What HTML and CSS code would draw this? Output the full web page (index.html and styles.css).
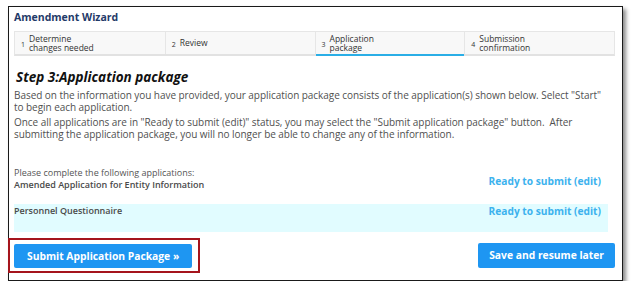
FILE: index.html
```html
<!DOCTYPE html>
<html lang="en">
<head>
  <meta charset="UTF-8" />
  <title>Amendment Wizard</title>
  <link rel="stylesheet" href="styles.css">
</head>
<body>

  <div class="frame">
    <h1 class="wizard-title">Amendment Wizard</h1>

    <!-- Steps -->
    <ol class="steps">
      <li class="step"><span class="step-num">1</span><span class="step-label">Determine<br>changes needed</span></li>
      <li class="step"><span class="step-num">2</span><span class="step-label">Review</span></li>
      <li class="step is-active"><span class="step-num">3</span><span class="step-label">Application<br>package</span></li>
      <li class="step"><span class="step-num">4</span><span class="step-label">Submission<br>confirmation</span></li>
    </ol>

    <h2 class="step-heading">Step 3:Application package</h2>

    <p class="intro">Based on the information you have provided, your application package consists of the application(s) shown below. Select "Start" to begin each application.</p>
    <p class="intro">Once all applications are in "Ready to submit (edit)" status, you may select the "Submit application package" button.&nbsp; After submitting the application package, you will no longer be able to change any of the information.</p>

    <!-- Applications -->
    <div class="apps">
      <p class="apps-note">Please complete the following applications:</p>
      <div class="app-row">
        <span class="app-name">Amended Application for Entity Information</span>
        <a href="#" class="app-status">Ready to submit (edit)</a>
      </div>
      <div class="app-row is-alt">
        <span class="app-name">Personnel Questionnaire</span>
        <a href="#" class="app-status">Ready to submit (edit)</a>
      </div>
    </div>

    <div class="actions">
      <div class="highlight">
        <button class="btn">Submit Application Package »</button>
      </div>
      <button class="btn btn-save">Save and resume later</button>
    </div>
  </div>

</body>
</html>
```

FILE: styles.css
```css
* { box-sizing: border-box; margin: 0; padding: 0; }

body {
  background-color: #fff;
  font-family: 'Open Sans', sans-serif;
  color: #4a4a4a;
}

.frame {
  width: 615px;
  height: 275px;
  margin: 6px 0 0 8px;
  padding: 3px 7px 0 5px;
  border: 1px solid #1a1a1a;
  box-shadow: 3px 3px 4px rgba(0,0,0,0.45);
  background-color: #fff;
}

.wizard-title {
  font-size: 10.5px;
  font-weight: 700;
  color: #1f3a68;
  height: 21px;
  line-height: 14px;
}

.steps {
  list-style: none;
  display: grid;
  grid-template-columns: repeat(4, 1fr);
  background-color: #f8f8f8;
  border: 1px solid #e6e6e6;
  border-bottom: 2px solid #e2e2e2;
  height: 25px;
}

.step {
  display: flex;
  align-items: center;
  gap: 4px;
  padding-left: 6px;
  border-left: 1px solid #e6e6e6;
  font-size: 8.5px;
  line-height: 9.5px;
  color: #333;
  position: relative;
}

.step:first-child {
  border-left: none;
}

.step-num {
  font-size: 7px;
  padding-top: 3px;
}

.step.is-active::after {
  content: '';
  position: absolute;
  left: 0;
  right: 0;
  bottom: -2px;
  height: 2px;
  background-color: #2aaee6;
}

.step-heading {
  font-size: 13.5px;
  font-weight: 700;
  font-style: italic;
  color: #111;
  margin: 12px 0 0 2px;
  line-height: 18px;
}

.intro {
  max-width: 596px;
  font-size: 10px;
  line-height: 12px;
  letter-spacing: -0.05px;
  color: #505050;
  margin-top: 3px;
}

.intro + .intro {
  margin-top: 3px;
}

.apps {
  margin-top: 27px;
}

.apps-note {
  font-size: 9px;
  line-height: 11px;
  color: #555;
}

.app-row {
  display: flex;
  justify-content: space-between;
  align-items: flex-start;
  width: 594px;
  height: 26px;
  padding-top: 2px;
}

.app-row.is-alt {
  background-color: #e1fcff;
  height: 28px;
  padding-top: 2px;
}

.app-name {
  font-size: 9px;
  line-height: 10px;
  font-weight: 600;
  color: #4a4a4a;
}

.app-status {
  font-size: 10.2px;
  font-weight: 700;
  color: #3cb2ee;
  text-decoration: none;
  margin-top: -6px;
  margin-right: 7px;
}

.app-row.is-alt .app-status {
  margin-top: -2px;
}

.actions {
  display: flex;
  justify-content: space-between;
  align-items: center;
  margin: 6px 0 0 -6px;
}

.highlight {
  border: 2px solid #a5141c;
  padding: 3px 6px 3px 4px;
}

.btn {
  font-family: 'Open Sans', sans-serif;
  font-size: 10.3px;
  font-weight: 700;
  color: #fff;
  background-color: #1e96f2;
  border: none;
  border-radius: 2px;
  height: 24px;
  padding: 0 13px;
}

.actions > .btn-save {
  height: 25px;
  margin-top: -1px;
  padding: 0 11px;
}
```
